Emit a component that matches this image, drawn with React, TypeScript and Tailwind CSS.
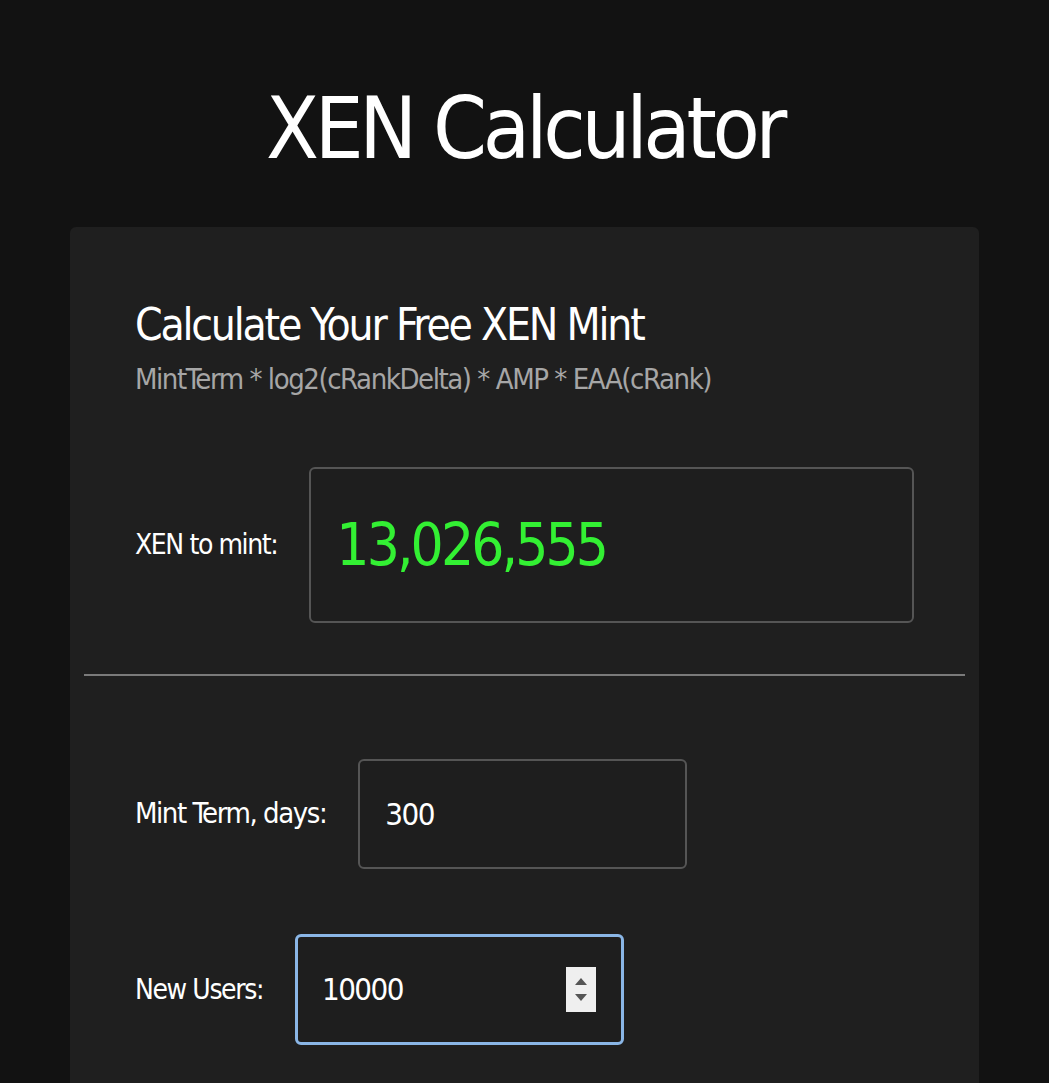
import React from 'react';

const font = { fontFamily: "'Liberation Sans Narrow', 'DejaVu Sans Condensed', 'Liberation Sans', sans-serif" };

const Spinner: React.FC = () => (
  <div className="flex h-[45px] w-[30px] flex-col items-center justify-center gap-[9px] bg-[#efefef]">
    <svg width="12" height="7" viewBox="0 0 12 7"><path d="M6 0 L12 7 L0 7 Z" fill="#555" /></svg>
    <svg width="12" height="7" viewBox="0 0 12 7"><path d="M0 0 L12 0 L6 7 Z" fill="#555" /></svg>
  </div>
);

export default function App() {
  return (
    <div className="min-h-screen bg-[#121212] text-white" style={font}>
      <h1 className="pt-[85px] text-center text-[86px] font-normal leading-none tracking-tighter">XEN Calculator</h1>

      <div className="mx-auto mt-[56px] w-[909px] rounded-md bg-[#1f1f1f] pb-[120px]">
        <div className="px-[65px] pt-[76px]">
          <h2 className="text-[44px] leading-none tracking-tighter">Calculate Your Free XEN Mint</h2>
          <p className="mt-[18px] text-[29px] leading-none tracking-tighter text-[#a6a6a6]">MintTerm * log2(cRankDelta) * AMP * EAA(cRank)</p>

          {/* result */}
          <div className="mt-[73px] flex items-center gap-8">
            <span className="text-[28px] tracking-tighter">XEN to mint:</span>
            <div className="flex h-[156px] flex-1 items-center rounded-md border-2 border-[#555] bg-[#1e1e1e] pl-[25px]">
              <span className="text-[58px] leading-none tracking-tighter text-[#33f033]">13,026,555</span>
            </div>
          </div>
        </div>

        <div className="mx-[14px] mt-[51px] h-[2px] bg-[#7a7a7a]" />

        <div className="px-[65px]">
          <div className="mt-[83px] flex items-center gap-8">
            <span className="text-[29px] tracking-tighter">Mint Term, days:</span>
            <div className="flex h-[110px] w-[329px] items-center rounded-md border-2 border-[#555] bg-[#1e1e1e] pl-[25px]">
              <span className="text-[31px] leading-none tracking-tighter">300</span>
            </div>
          </div>

          <div className="mt-[65px] flex items-center gap-8">
            <span className="text-[28px] tracking-tighter">New Users:</span>
            <div className="flex h-[111px] w-[329px] items-center rounded-md border-[3px] border-[#8ab6e6] bg-[#1e1e1e] pl-[24px] pr-[25px]">
              <span className="flex-1 text-[31px] leading-none tracking-tighter">10000</span>
              <Spinner />
            </div>
          </div>
        </div>
      </div>
    </div>
  );
}
